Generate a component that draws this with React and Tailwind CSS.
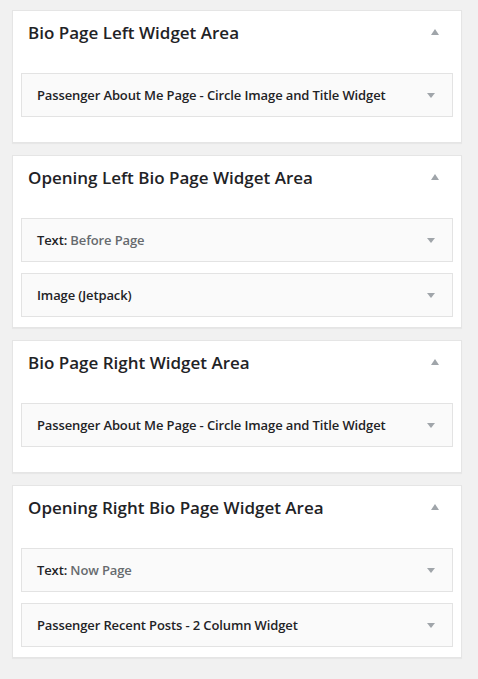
import React from "react";

const areas = [
  {
    title: "Bio Page Left Widget Area",
    widgets: [{ name: "Passenger About Me Page - Circle Image and Title Widget" }],
  },
  {
    title: "Opening Left Bio Page Widget Area",
    widgets: [{ name: "Text", sub: "Before Page" }, { name: "Image (Jetpack)" }],
  },
  {
    title: "Bio Page Right Widget Area",
    widgets: [{ name: "Passenger About Me Page - Circle Image and Title Widget" }],
  },
  {
    title: "Opening Right Bio Page Widget Area",
    widgets: [{ name: "Text", sub: "Now Page" }, { name: "Passenger Recent Posts - 2 Column Widget" }],
  },
];

function UpArrow() {
  return (
    <svg width="8" height="6" viewBox="0 0 8 6" className="block">
      <polygon points="4,0 8,6 0,6" fill="#a0a5aa" />
    </svg>
  );
}

function DownArrow() {
  return (
    <svg width="8" height="5" viewBox="0 0 8 5" className="block">
      <polygon points="0,0 8,0 4,5" fill="#a0a5aa" />
    </svg>
  );
}

function Widget({ name, sub }) {
  return (
    <div className="h-[44px] border border-[#e3e3e3] bg-[#fafafa] flex items-center justify-between pl-[15px] pr-[17px]">
      <div className="text-[13px] leading-[20px] font-semibold tracking-[-0.12px] text-[#1f2326]">
        {sub ? (
          <>
            {name}: <span className="text-[#666a6e]">{sub}</span>
          </>
        ) : (
          name
        )}
      </div>
      <DownArrow />
    </div>
  );
}

function Area({ title, widgets }) {
  return (
    <div className="w-[450px] bg-white border border-[#e5e5e5] shadow-[0_1px_1px_rgba(0,0,0,0.04)]">
      <div className="h-[62px] pt-[10px] pl-[15px] pr-[22px] flex justify-between">
        <h3 className="text-[17px] leading-[24px] font-semibold text-[#1f2326] m-0">{title}</h3>
        <div className="pt-[8px]">
          <UpArrow />
        </div>
      </div>
      <div className="px-[8px] pb-[10px]">
        <div className="min-h-[59px] flex flex-col gap-[11px]">
          {widgets.map((w, i) => (
            <Widget key={i} {...w} />
          ))}
        </div>
      </div>
    </div>
  );
}

export default function App() {
  return (
    <div
      className="w-[478px] min-h-[679px] bg-[#f1f1f1] pt-[10px] pl-[12px] flex flex-col gap-[12px]"
      style={{ fontFamily: '"Open Sans", "Noto Sans", sans-serif' }}
    >
      {areas.map((a, i) => (
        <Area key={i} {...a} />
      ))}
    </div>
  );
}
